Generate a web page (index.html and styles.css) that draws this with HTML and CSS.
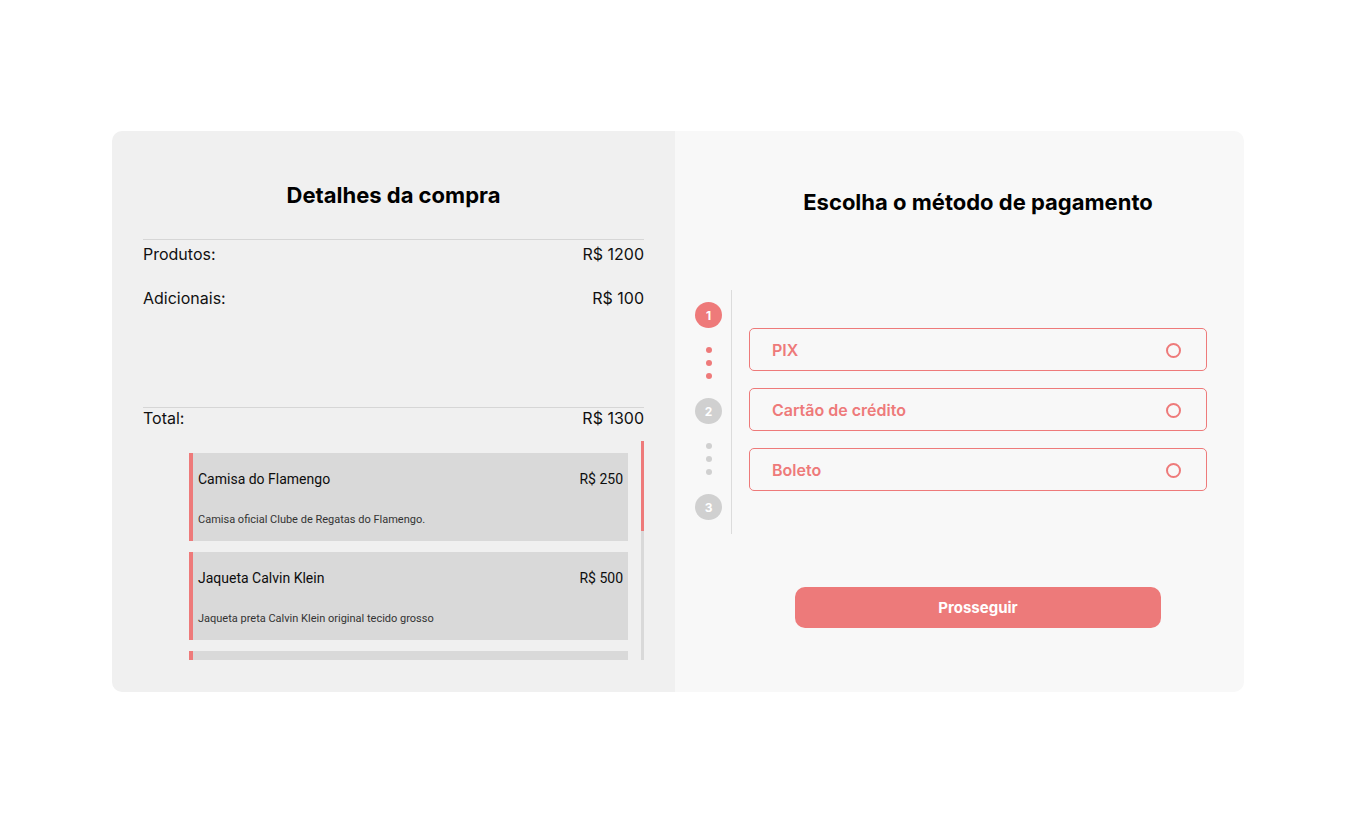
FILE: index.html
```html
<!DOCTYPE html>
<html lang="pt-BR">
<head>
<meta charset="utf-8">
<title>Checkout</title>
<link rel="stylesheet" href="styles.css">
</head>
<body>
<main class="checkout">
  <section class="details">
    <h2 class="title">Detalhes da compra</h2>
    <div class="summary">
      <div class="row"><span>Produtos:</span><span>R$ 1200</span></div>
      <div class="row"><span>Adicionais:</span><span>R$ 100</span></div>
    </div>
    <div class="row total"><span>Total:</span><span>R$ 1300</span></div>
    <div class="product-wrap">
      <div class="products">
        <div class="card">
          <div class="card-head"><span>Camisa do Flamengo</span><span>R$ 250</span></div>
          <p class="card-desc">Camisa oficial Clube de Regatas do Flamengo.</p>
        </div>
        <div class="card">
          <div class="card-head"><span>Jaqueta Calvin Klein</span><span>R$ 500</span></div>
          <p class="card-desc">Jaqueta preta Calvin Klein original tecido grosso</p>
        </div>
        <div class="card">
          <div class="card-head"><span>Tênis Nike Air</span><span>R$ 300</span></div>
          <p class="card-desc">Tênis Nike Air Max branco tamanho 42</p>
        </div>
      </div>
      <div class="scrollbar"><div class="thumb"></div></div>
    </div>
  </section>
  <section class="payment">
    <h2 class="title pay-title">Escolha o método de pagamento</h2>
    <div class="pay-body">
      <div class="stepper">
        <div class="step active">1</div>
        <div class="dots active"><i></i><i></i><i></i></div>
        <div class="step">2</div>
        <div class="dots"><i></i><i></i><i></i></div>
        <div class="step">3</div>
      </div>
      <div class="options">
        <label class="option"><span>PIX</span><span class="radio"></span></label>
        <label class="option"><span>Cartão de crédito</span><span class="radio"></span></label>
        <label class="option"><span>Boleto</span><span class="radio"></span></label>
      </div>
    </div>
    <div class="actions">
      <button class="btn">Prosseguir</button>
    </div>
  </section>
</main>
</body>
</html>
```
FILE: styles.css
```css
* { box-sizing: border-box; }
html, body { margin: 0; background: #ffffff; }
body {
  font-family: Inter, "Noto Sans", sans-serif;
  color: #111;
  padding: 131px 0 0 112px;
}
.checkout {
  display: flex;
  width: 1132px;
  height: 561px;
  border-radius: 10px;
  overflow: hidden;
}
.details {
  width: 563px;
  background: #f0f0f0;
  padding: 51px 31px 0 31px;
  display: flex;
  flex-direction: column;
}
.title {
  margin: 0;
  font-size: 22px;
  line-height: 27px;
  font-weight: 700;
  text-align: center;
  color: #000;
}
.summary {
  margin-top: 30px;
  border-top: 1px solid #d6d6d6;
  height: 169px;
  border-bottom: 1px solid #d6d6d6;
}
.row {
  display: flex;
  justify-content: space-between;
  font-size: 16px;
  line-height: 20px;
  padding: 4px 0 20px;
  color: #111;
}
.row.total { padding: 0; }
.product-wrap {
  margin: 13px 0 0 46px;
  height: 219px;
  display: flex;
  gap: 13px;
}
.products {
  flex: 1;
  overflow: hidden;
  padding-top: 12px;
  display: flex;
  flex-direction: column;
  gap: 11px;
}
.scrollbar {
  width: 3px;
  background: #d9d9d9;
}
.thumb {
  height: 90px;
  background: #ee7a7a;
}
.card {
  flex: 0 0 88px;
  background: #d9d9d9;
  border-left: 4px solid #ee7a7a;
  padding: 18px 5px 0 5px;
  font-family: Roboto, "Liberation Sans", sans-serif;
}
.card-head {
  display: flex;
  justify-content: space-between;
  font-size: 14px;
  line-height: 17px;
  font-weight: 400;
  color: #0d0d0d;
}
.card-desc {
  margin: 25px 0 0;
  font-size: 11px;
  line-height: 13px;
  color: #333;
}
.payment {
  flex: 1;
  background: #f8f8f8;
  padding-top: 58px;
  display: flex;
  flex-direction: column;
}
.pay-title { padding-left: 37px; }
.pay-body {
  display: flex;
  margin-top: 74px;
  padding-left: 20px;
}
.stepper {
  width: 37px;
  height: 244px;
  border-right: 1px solid #dcdcdc;
  padding-top: 12px;
  display: flex;
  flex-direction: column;
  align-items: flex-start;
}
.step {
  width: 27px;
  height: 26px;
  border-radius: 50%;
  background: #d0d0d0;
  color: #fff;
  font-size: 12px;
  font-weight: 700;
  display: flex;
  align-items: center;
  justify-content: center;
}
.step.active { background: #ee7a7a; }
.dots {
  width: 27px;
  display: flex;
  flex-direction: column;
  align-items: center;
  gap: 7px;
  padding: 19px 0;
}
.dots i {
  width: 6px;
  height: 6px;
  border-radius: 50%;
  background: #d0d0d0;
}
.dots.active i { background: #ee7a7a; }
.options {
  margin: 38px 0 0 17px;
  width: 458px;
  display: flex;
  flex-direction: column;
  gap: 17px;
}
.option {
  height: 43px;
  border: 1px solid #ee7a7a;
  border-radius: 5px;
  display: flex;
  align-items: center;
  justify-content: space-between;
  padding: 0 25px 0 22px;
  color: #ee7a7a;
  font-size: 16px;
  font-weight: 600;
}
.radio {
  width: 15px;
  height: 15px;
  border: 2px solid #ee7a7a;
  border-radius: 50%;
  margin-top: 2px;
}
.actions {
  margin-top: 53px;
  padding-left: 120px;
}
.btn {
  width: 366px;
  height: 41px;
  border: 0;
  border-radius: 10px;
  background: #ed7a7a;
  color: #fff;
  font-family: Inter, "Noto Sans", sans-serif;
  font-size: 15px;
  font-weight: 700;
}
```
